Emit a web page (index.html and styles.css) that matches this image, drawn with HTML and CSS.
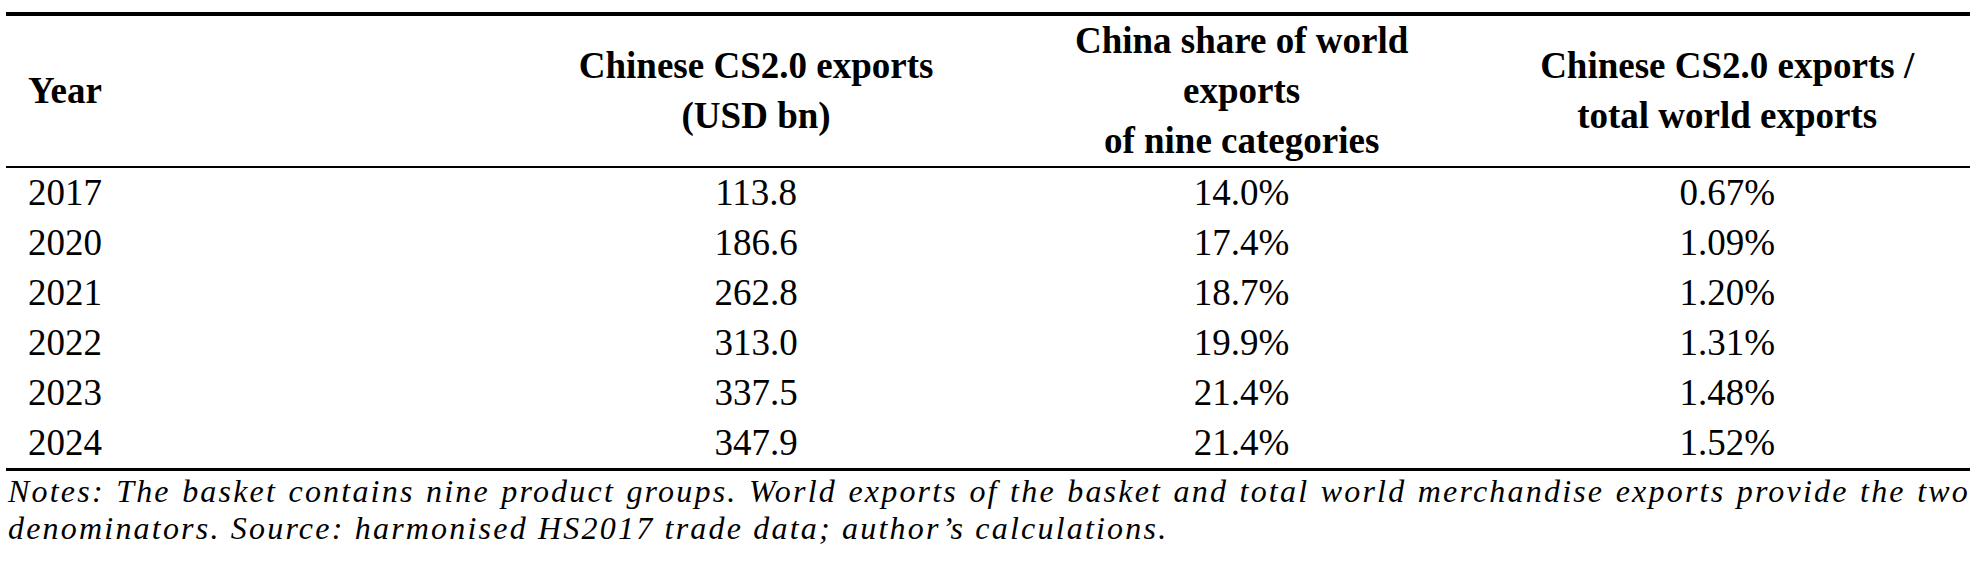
FILE: index.html
```html
<!DOCTYPE html>
<html lang="en">
<head>
<meta charset="utf-8">
<title>Chinese CS2.0 exports</title>
<link rel="stylesheet" href="styles.css">
</head>
<body>
<div class="wrap">
  <table class="data">
    <thead>
      <tr>
        <th class="c-year">Year</th>
        <th>Chinese CS2.0 exports<br>(USD bn)</th>
        <th>China share of world<br>exports<br>of nine categories</th>
        <th>Chinese CS2.0 exports /<br>total world exports</th>
      </tr>
    </thead>
    <tbody>
      <tr><td class="c-year">2017</td><td>113.8</td><td>14.0%</td><td>0.67%</td></tr>
      <tr><td class="c-year">2020</td><td>186.6</td><td>17.4%</td><td>1.09%</td></tr>
      <tr><td class="c-year">2021</td><td>262.8</td><td>18.7%</td><td>1.20%</td></tr>
      <tr><td class="c-year">2022</td><td>313.0</td><td>19.9%</td><td>1.31%</td></tr>
      <tr><td class="c-year">2023</td><td>337.5</td><td>21.4%</td><td>1.48%</td></tr>
      <tr><td class="c-year">2024</td><td>347.9</td><td>21.4%</td><td>1.52%</td></tr>
    </tbody>
  </table>
  <p class="notes">Notes: The basket contains nine product groups. World exports of the basket and total world merchandise exports provide the two denominators. Source: harmonised HS2017 trade data; author’s calculations.</p>
</div>
</body>
</html>
```

FILE: styles.css
```css
html, body {
  margin: 0;
  padding: 0;
  background: #ffffff;
}

body {
  font-family: "Liberation Serif", "Times New Roman", serif;
  color: #000000;
}

.wrap {
  width: 1964px;
  padding: 12px 0 0 6px;
}

.data {
  width: 1964px;
  border-collapse: collapse;
  table-layout: fixed;
  font-size: 37px;
  line-height: 50px;
  border-top: 4px solid #000;
  border-bottom: 3px solid #000;
}

.data th,
.data td {
  width: 25%;
  padding: 0;
  text-align: center;
  vertical-align: middle;
}

.data th {
  font-weight: bold;
  border-bottom: 2px solid #000;
}

.data .c-year {
  text-align: left;
  padding-left: 22px;
}

.notes {
  margin: 2px 0 0 2px;
  font-style: italic;
  font-size: 32px;
  line-height: 37px;
  letter-spacing: 2.2px;
  text-align: justify;
}
```
